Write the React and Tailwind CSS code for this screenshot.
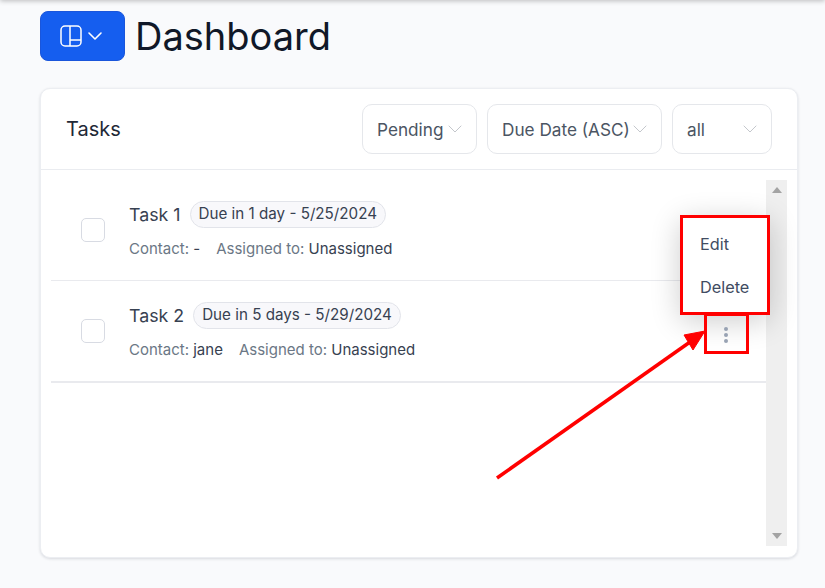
import { useState } from 'react';

const tasks = [
  { name: 'Task 1', due: 'Due in 1 day - 5/25/2024', contact: '-' },
  { name: 'Task 2', due: 'Due in 5 days - 5/29/2024', contact: 'jane' },
];

function Chevron({ className }) {
  return (
    <svg className={className} viewBox="0 0 16 16" fill="none" stroke="currentColor" strokeWidth="1" strokeLinecap="round" strokeLinejoin="round">
      <path d="M2 5l6 6 6-6" />
    </svg>
  );
}

function FilterSelect({ label, width }) {
  return (
    <div className={`${width} h-[50px] flex items-center justify-between pl-[14px] pr-[13px] bg-white border border-[#e5e7eb] rounded-[10px] text-[17.2px] text-[#4b5563]`}>
      <span className="whitespace-nowrap pt-[2px]">{label}</span>
      <Chevron className="w-[16px] h-[16px] text-[#c4c7cc] shrink-0" />
    </div>
  );
}

function TaskRow({ task, last }) {
  return (
    <div className={`flex items-start ${last ? 'h-[102px] border-b-2 border-[#e9eaee]' : 'h-[101px] border-b border-[#e9eaee]'}`}>
      <div className="w-[24px] h-[24px] ml-[30px] mt-[38px] bg-white border border-[#d8dbe3] rounded-[5px] shrink-0" />
      <div className="ml-[24px] mt-[21px]">
        <div className="flex items-center h-[27px]">
          <span className="text-[17.8px] pt-[2px] text-[#374151]">{task.name}</span>
          <span className="ml-[9px] h-[27px] px-[8px] flex items-center bg-[#f8f8fb] border border-[#e2e4ea] rounded-full text-[15.2px] text-[#374151] whitespace-nowrap">
            {task.due}
          </span>
        </div>
        <div className="mt-[11px] flex text-[15px] leading-[20px] text-[#6b7785] whitespace-nowrap">
          <span>Contact: <span className="text-[#374151]">{task.contact}</span></span>
          <span className="ml-[16px]">Assigned to: <span className="text-[#374151]">Unassigned</span></span>
        </div>
      </div>
    </div>
  );
}

export default function App() {
  const [menuOpen] = useState(true);

  return (
    <div className="relative w-[825px] h-[588px] overflow-hidden bg-[#f9fafc] font-['Inter',sans-serif]">
      <div className="absolute left-0 right-0 top-[-10px] h-[10px] shadow-[0_1px_5px_rgba(0,0,0,0.25)]" />

      <div className="flex items-center gap-[10px] pl-[40px] pt-[11px]">
        <button className="w-[85px] h-[50px] flex items-center justify-center gap-[5px] pr-[3px] bg-[#155eef] border border-[#1a56db] rounded-[8px] text-white">
          <svg className="w-[22px] h-[22px]" viewBox="0 0 22 22" fill="none" stroke="currentColor" strokeWidth="1.5">
            <rect x="1" y="1" width="20" height="20" rx="4" />
            <path d="M10 1v20M10 15h11" />
          </svg>
          <svg className="w-[16px] h-[16px]" viewBox="0 0 16 16" fill="none" stroke="currentColor" strokeWidth="1.6" strokeLinecap="round" strokeLinejoin="round">
            <path d="M2 5l6 6 6-6" />
          </svg>
        </button>
        <h1 className="text-[38px] leading-[50px] text-[#101828]">Dashboard</h1>
      </div>

      <div className="ml-[40px] mt-[27px] w-[758px] h-[470px] bg-white border border-[#eceef2] rounded-[10px] shadow-[0_1px_3px_rgba(16,24,40,0.14)]">
        <div className="h-[81px] flex items-center justify-between pl-[25px] pr-[25px] border-b border-[#eaecf0]">
          <h2 className="text-[20px] text-[#1f2937]">Tasks</h2>
          <div className="flex gap-[10px]">
            <FilterSelect label="Pending" width="w-[115px]" />
            <FilterSelect label="Due Date (ASC)" width="w-[175px]" />
            <FilterSelect label="all" width="w-[100px]" />
          </div>
        </div>

        <div className="flex pl-[10px] pt-[10px]">
          <div className="relative w-[715px]">
            {tasks.map((task, i) => (
              <TaskRow key={task.name} task={task} last={i === tasks.length - 1} />
            ))}

            {menuOpen && (
              <div className="absolute left-[629px] top-[35px] w-[90px] h-[100px] flex flex-col pl-[20px] pt-[8px] bg-white rounded-[6px] shadow-[0_6px_30px_rgba(0,0,0,0.2)] text-[16.3px] text-[#414c62]">
                <span className="h-[43px] flex items-center">Edit</span>
                <span className="h-[43px] flex items-center">Delete</span>
              </div>
            )}

            <div className="absolute left-[652px] top-[135px] w-[45px] h-[39px] flex flex-col items-center justify-center gap-[2px]">
              <span className="w-[4px] h-[4px] rounded-full bg-[#98a2b3]" />
              <span className="w-[4px] h-[4px] rounded-full bg-[#98a2b3]" />
              <span className="w-[4px] h-[4px] rounded-full bg-[#98a2b3]" />
            </div>
          </div>

          <div className="w-[21px] h-[366px] flex flex-col justify-between items-center py-[7px] bg-[#efefef]">
            <span className="w-0 h-0 border-x-[5px] border-x-transparent border-b-[6px] border-b-[#a3a3a3]" />
            <span className="w-0 h-0 border-x-[5px] border-x-transparent border-t-[6px] border-t-[#a3a3a3]" />
          </div>
        </div>
      </div>

      {/* annotation layer */}
      <div className="absolute left-[680px] top-[215px] w-[90px] h-[100px] border-[3px] border-[#ff0000]" />
      <div className="absolute left-[704px] top-[313px] w-[45px] h-[41px] border-[3px] border-[#ff0000]" />
      <svg className="absolute left-0 top-0 w-[825px] h-[588px] pointer-events-none" viewBox="0 0 825 588">
        <path d="M497 478L690 342" stroke="#ff0000" strokeWidth="3.5" fill="none" />
        <path d="M705 331L684 335L693 350Z" fill="#ff0000" stroke="#ff0000" strokeWidth="1" />
      </svg>
    </div>
  );
}
